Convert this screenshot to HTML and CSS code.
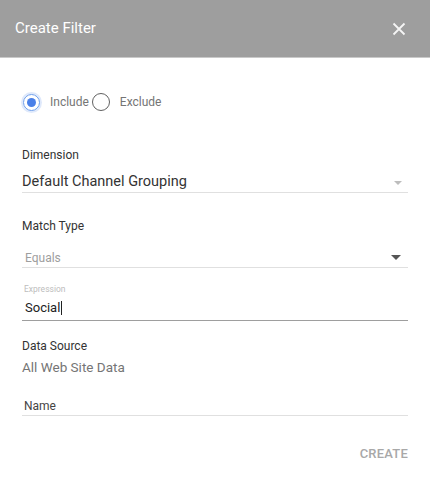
FILE: index.html
```html
<!DOCTYPE html>
<html>
<head>
<meta charset="utf-8">
<link rel="stylesheet" href="styles.css">
</head>
<body>
<div class="dialog">
  <header class="header">
    <span class="title">Create Filter</span>
    <svg class="close" width="14" height="14" viewBox="0 0 14 14"><path d="M1.5 1.5 L12.5 12.5 M12.5 1.5 L1.5 12.5" stroke="#f5f5f5" stroke-width="1.8" fill="none"/></svg>
  </header>
  <main class="body">
    <div class="radios">
      <span class="radio checked"><span class="dot"></span></span>
      <span class="radio-label">Include</span>
      <span class="radio"></span>
      <span class="radio-label">Exclude</span>
    </div>

    <div class="label dim-label">Dimension</div>
    <div class="select big">
      <span>Default Channel Grouping</span>
      <span class="arrow light"></span>
    </div>

    <div class="label match-label">Match Type</div>
    <div class="select small">
      <span>Equals</span>
      <span class="arrow dark"></span>
    </div>

    <div class="tiny-label">Expression</div>
    <div class="input"><span>Social</span><span class="caret"></span></div>

    <div class="label ds-label">Data Source</div>
    <div class="ds-value">All Web Site Data</div>

    <div class="name">Name</div>

    <div class="actions"><span class="create">CREATE</span></div>
  </main>
</div>
</body>
</html>
```
FILE: styles.css
```css
* { box-sizing: border-box; }
html, body { margin: 0; padding: 0; background: #fff; }
body { font-family: Roboto, "Noto Sans", Arial, sans-serif; color: #333; width: 430px; height: 477px; overflow: hidden; }

.header {
  height: 58px;
  background: #9e9e9e;
  border-bottom: 1px solid #c9c9c9;
  display: flex;
  align-items: center;
  justify-content: space-between;
  padding: 0 24px 0 15px;
}
.title { color: #fff; font-size: 15px; line-height: 20px; margin-top: -1px; }
.close { display: block; margin-top: 1px; }

.body { padding: 0 22px; }

.radios {
  margin-top: 34px;
  height: 20px;
  display: flex;
  align-items: center;
}
.radio {
  width: 18px; height: 18px;
  border-radius: 50%;
  border: 1.5px solid #616161;
  display: flex; align-items: center; justify-content: center;
  margin-left: 1px;
}
.radio.checked {
  border-color: #6d9eeb;
  box-shadow: 0 0 0 2px #dfe9fb;
  width: 17px; height: 17px;
}
.dot { width: 9px; height: 9px; border-radius: 50%; background: #4a80e8; }
.radio-label { font-size: 12px; color: #757575; line-height: 20px; margin-left: 10px; margin-right: 2px; }

.label { font-size: 12px; line-height: 14px; color: #333; }
.dim-label { margin-top: 36px; }

.select {
  display: flex;
  align-items: center;
  justify-content: space-between;
  border-bottom: 1px solid #e0e0e0;
}
.select.big {
  margin-top: 10px;
  height: 21px;
  font-size: 14.5px;
  line-height: 20px;
  color: #333;
  padding-right: 6px;
}
.select.big .arrow { margin-top: 2px; }
.match-label { margin-top: 26px; }
.select.small {
  margin-top: 15px;
  height: 20px;
  font-size: 12px;
  line-height: 18px;
  color: #9e9e9e;
  padding-left: 3px;
  padding-right: 7px;
}
.arrow { width: 0; height: 0; border-left: 5px solid transparent; border-right: 5px solid transparent; }
.arrow.light { border-top: 4px solid #bdbdbd; border-left-width: 4px; border-right-width: 4px; }
.arrow.dark { border-top: 5px solid #555; }

.tiny-label { margin-top: 16px; font-size: 8.5px; line-height: 11px; color: #bdbdbd; padding-left: 2px; }
.input {
  margin-top: 4px;
  height: 22px;
  font-size: 13px;
  line-height: 18px;
  color: #222;
  padding-left: 3px;
  border-bottom: 1px solid #9e9e9e;
  display: flex;
  align-items: flex-start;
}
.caret { display: inline-block; width: 1px; height: 14px; background: #222; margin-top: 2px; margin-left: 1px; }

.ds-label { margin-top: 18px; }
.ds-value { margin-top: 4px; font-size: 13.5px; line-height: 20px; color: #757575; }

.name {
  margin-top: 22px;
  font-size: 12px;
  line-height: 14px;
  height: 17px;
  padding-left: 2px;
  color: #444;
  border-bottom: 1px solid #e0e0e0;
}

.actions { margin-top: 30px; display: flex; justify-content: flex-end; }
.create { font-size: 13px; line-height: 16px; font-weight: 500; color: #a8a8a8; letter-spacing: 0.2px; }
```
